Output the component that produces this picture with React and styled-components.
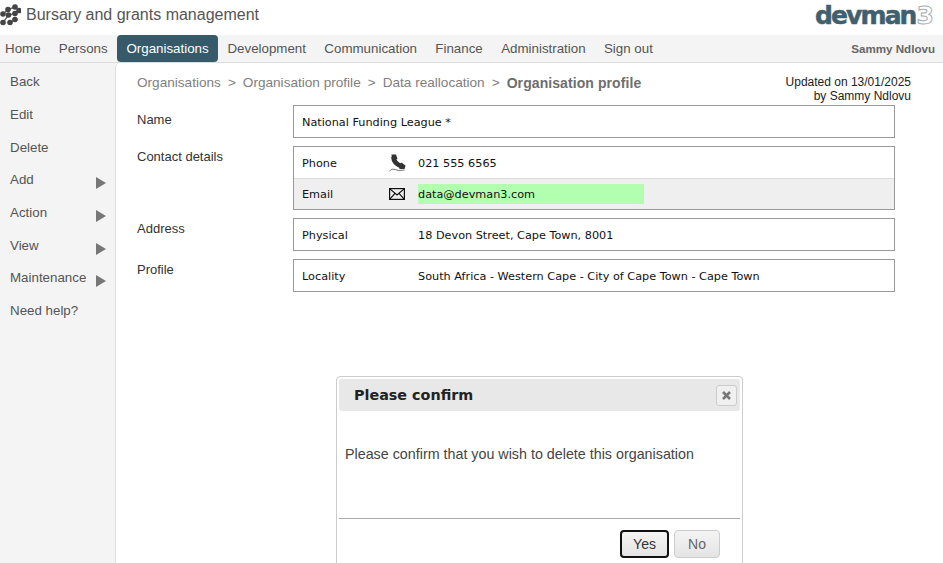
import React from "react";
import styled, { createGlobalStyle } from "styled-components";

const GlobalStyle = createGlobalStyle`
  html, body {
    margin: 0;
    padding: 0;
    height: 563px;
    overflow: hidden;
    background: #fff;
    font-family: "Liberation Sans", Arial, sans-serif;
  }
`;

const Page = styled.div`
  position: relative;
  width: 943px;
  height: 563px;
  overflow: hidden;
  background: #f4f4f4;
`;

const Header = styled.header`
  height: 35px;
  background: #fff;
  display: flex;
  align-items: center;
  justify-content: space-between;
  padding: 0 11px 5px 0;
  box-sizing: border-box;
`;

const Brand = styled.div`
  display: flex;
  align-items: center;
  gap: 5px;
  font-size: 16px;
  color: #555;
`;

const LogoText = styled.div`
  font-family: "DejaVu Sans", sans-serif;
  font-weight: 700;
  font-size: 25px;
  letter-spacing: -1.9px;
  color: #41606f;
  -webkit-text-stroke: 0.5px #41606f;
  span {
    color: #fff;
    margin-left: 1px;
    -webkit-text-stroke: 1px #a3adb1;
  }
`;

const Nav = styled.nav`
  height: 28px;
  box-sizing: border-box;
  display: flex;
  align-items: stretch;
  padding-right: 8px;
  border-bottom: 1px solid #ddd;
  font-size: 13.33px;
`;

const NavItem = styled.div`
  height: 27px;
  display: flex;
  align-items: center;
  padding: 0 ${(props) => (props.$active ? 9.6 : 9.2)}px;
  border-radius: 4px;
  color: ${(props) => (props.$active ? "#fff" : "#555")};
  background: ${(props) => (props.$active ? "#375a6a" : "transparent")};
  &:first-child {
    padding-left: 5px;
    padding-right: 9px;
  }
`;

const NavUser = styled.div`
  margin-left: auto;
  display: flex;
  align-items: center;
  height: 27px;
  font-size: 11.6px;
  font-weight: 700;
  color: #666;
`;

const Body = styled.div`
  display: flex;
  height: 500px;
`;

const Sidebar = styled.aside`
  width: 115px;
  flex: none;
  padding-top: 2.5px;
  box-sizing: border-box;
`;

const SideItem = styled.div`
  height: 32.7px;
  display: flex;
  align-items: center;
  padding-left: 10px;
  font-size: 13.33px;
  color: #555;
`;

const Arrow = styled.span`
  width: 0;
  height: 0;
  margin: 7px 9px 0 auto;
  border-left: 10px solid #777;
  border-top: 6px solid transparent;
  border-bottom: 6px solid transparent;
`;

const Main = styled.main`
  flex: 1;
  background: #fff;
  border-left: 1px solid #ddd;
  border-top-left-radius: 5px;
  padding: 0 32px 0 21px;
`;

const TopRow = styled.div`
  display: flex;
  justify-content: space-between;
  height: 42px;
  padding-top: 12px;
  box-sizing: border-box;
`;

const Crumbs = styled.div`
  display: flex;
  gap: 7px;
  font-size: 13.6px;
  color: #808080;
  line-height: 16px;
  b {
    color: #6e6e6e;
    font-size: 14px;
    letter-spacing: 0.08px;
  }
`;

const Updated = styled.div`
  font-size: 12px;
  line-height: 14px;
  text-align: right;
  color: #222;
`;

const Section = styled.section`
  display: grid;
  grid-template-columns: 156px 602px;
  margin-bottom: 8px;
`;

const Label = styled.div`
  font-size: 13px;
  line-height: 16px;
  padding-top: ${(props) => props.$top || 3}px;
  color: #333;
`;

const Box = styled.div`
  border: 1px solid #999;
`;

const Row = styled.div`
  display: flex;
  align-items: center;
  box-sizing: border-box;
  height: 31px;
  padding: ${(props) => (props.$shaded ? 0 : 1)}px 0 0 8px;
  font-family: "DejaVu Sans", Verdana, sans-serif;
  font-size: 11.25px;
  color: #111;
  background: ${(props) => (props.$shaded ? "#efefef" : "#fff")};
  border-top: ${(props) => (props.$shaded ? "1px solid #ddd" : "none")};
`;

const RowLabel = styled.div`
  width: ${(props) => (props.$wide ? 116 : 87)}px;
  flex: none;
`;

const RowIcon = styled.div`
  width: 29px;
  flex: none;
  display: flex;
  align-items: center;
`;

const RowValue = styled.div`
  ${(props) =>
    props.$highlight &&
    `
    width: 226px;
    height: 20px;
    line-height: 21px;
    background: #b3ffb0;
  `}
`;

const Dialog = styled.div`
  position: absolute;
  left: 336px;
  top: 376px;
  width: 407px;
  height: 200px;
  box-sizing: border-box;
  background: #fff;
  border: 1px solid #ccc;
  border-radius: 4px;
  padding: 2px;
`;

const DialogTitle = styled.div`
  height: 32px;
  background: #e8e8e8;
  border-radius: 3px;
  display: flex;
  align-items: center;
  justify-content: space-between;
  padding: 0 3px 0 15px;
  font-family: "DejaVu Sans", Verdana, sans-serif;
  font-size: 14.35px;
  font-weight: 700;
  color: #222;
`;

const CloseButton = styled.div`
  width: 19px;
  height: 19px;
  border: 1px solid #ccc;
  border-radius: 3px;
  background: #f0f0f0;
  display: flex;
  align-items: center;
  justify-content: center;
`;

const DialogText = styled.div`
  height: 107px;
  box-sizing: border-box;
  padding: 35px 0 0 6px;
  font-size: 14.3px;
  line-height: 16px;
  color: #444;
`;

const DialogFooter = styled.div`
  border-top: 1px solid #aaa;
  display: flex;
  justify-content: flex-end;
  gap: 5px;
  padding: 11px 20px 0 0;
`;

const Button = styled.div`
  box-sizing: border-box;
  height: 28px;
  width: ${(props) => props.$width}px;
  display: flex;
  align-items: center;
  justify-content: center;
  font-size: 14px;
  border-radius: 4px;
  color: ${(props) => (props.$focused ? "#333" : "#666")};
  border: ${(props) => (props.$focused ? "2px solid #111" : "1px solid #ccc")};
  background: linear-gradient(#f4f4f4, #e4e4e4);
`;

const NAV_ITEMS = ["Home", "Persons", "Organisations", "Development", "Communication", "Finance", "Administration", "Sign out"];

const SIDE_ITEMS = [
  { name: "Back" },
  { name: "Edit" },
  { name: "Delete" },
  { name: "Add", more: true },
  { name: "Action", more: true },
  { name: "View", more: true },
  { name: "Maintenance", more: true },
  { name: "Need help?" },
];

// three diagonal bands of dots, like the original mark
const BANDS = [
  [[3, 10], [8, 5.5], [15, 3]],
  [[3, 18.5], [8.5, 11], [15, 9.5], [19, 6.5]],
  [[10, 18.5], [15, 15.5]],
];

const BrandIcon = () => (
  <svg width="21" height="22" viewBox="0 0 21 22">
    {BANDS.map((band, i) => (
      <g key={i} fill="#444">
        <polyline points={band.map((p) => p.join(",")).join(" ")} fill="none" stroke="#666" strokeWidth="1.4" />
        {band.map((p) => (
          <circle key={p.join()} cx={p[0]} cy={p[1]} r="2.8" />
        ))}
      </g>
    ))}
  </svg>
);

const PhoneIcon = () => (
  <svg width="17" height="18" viewBox="0 0 17 18" fill="none">
    <path d="M4.500 3 Q4.500 9 12.500 12.500" stroke="#333" strokeWidth="4.6" />
    <path d="M2.500 .5 L7 .5 L8.500 5 L3 6.500 Z M10 11 L12.500 8.500 L16.500 11.500 L15.500 15 L10.500 15 Z" fill="#333" />
    <path d="M.5 17 Q2.500 14 6 15.500 Q9 17.500 15.500 16" stroke="#777" strokeWidth="1" />
  </svg>
);

const MailIcon = () => (
  <svg width="16" height="12" viewBox="0 0 16 12" fill="none" stroke="#111" strokeWidth="1.2">
    <rect x=".6" y=".6" width="14.8" height="10.8" />
    <path d="M.6 .6 L8 7 L15.400 .6 M.6 11.400 L6 5.300 M15.400 11.400 L10 5.300" />
  </svg>
);

const CloseIcon = () => (
  <svg width="9" height="9" viewBox="0 0 9 9" stroke="#777" strokeWidth="2.6">
    <path d="M1 1 L8 8 M8 1 L1 8" />
  </svg>
);

export default function App() {
  return (
    <Page>
      <GlobalStyle />
      <Header>
        <Brand>
          <BrandIcon />
          Bursary and grants management
        </Brand>
        <LogoText>
          devman<span>3</span>
        </LogoText>
      </Header>
      <Nav>
        {NAV_ITEMS.map((item) => (
          <NavItem key={item} $active={item === "Organisations"}>
            {item}
          </NavItem>
        ))}
        <NavUser>Sammy Ndlovu</NavUser>
      </Nav>
      <Body>
        <Sidebar>
          {SIDE_ITEMS.map((item) => (
            <SideItem key={item.name}>
              {item.name}
              {item.more && <Arrow />}
            </SideItem>
          ))}
        </Sidebar>
        <Main>
          <TopRow>
            <Crumbs>
              <span>Organisations</span>
              <span>&gt;</span>
              <span>Organisation profile</span>
              <span>&gt;</span>
              <span>Data reallocation</span>
              <span>&gt;</span>
              <b>Organisation profile</b>
            </Crumbs>
            <Updated>
              Updated on 13/01/2025
              <br />
              by Sammy Ndlovu
            </Updated>
          </TopRow>
          <Section>
            <Label $top={7}>Name</Label>
            <Box>
              <Row>National Funding League *</Row>
            </Box>
          </Section>
          <Section>
            <Label>Contact details</Label>
            <Box>
              <Row>
                <RowLabel>Phone</RowLabel>
                <RowIcon>
                  <PhoneIcon />
                </RowIcon>
                <RowValue>021 555 6565</RowValue>
              </Row>
              <Row $shaded>
                <RowLabel>Email</RowLabel>
                <RowIcon>
                  <MailIcon />
                </RowIcon>
                <RowValue $highlight>data@devman3.com</RowValue>
              </Row>
            </Box>
          </Section>
          <Section>
            <Label>Address</Label>
            <Box>
              <Row>
                <RowLabel $wide>Physical</RowLabel>
                <RowValue>18 Devon Street, Cape Town, 8001</RowValue>
              </Row>
            </Box>
          </Section>
          <Section>
            <Label>Profile</Label>
            <Box>
              <Row>
                <RowLabel $wide>Locality</RowLabel>
                <RowValue>South Africa - Western Cape - City of Cape Town - Cape Town</RowValue>
              </Row>
            </Box>
          </Section>
        </Main>
      </Body>
      <Dialog>
        <DialogTitle>
          Please confirm
          <CloseButton>
            <CloseIcon />
          </CloseButton>
        </DialogTitle>
        <DialogText>Please confirm that you wish to delete this organisation</DialogText>
        <DialogFooter>
          <Button $focused $width={49}>
            Yes
          </Button>
          <Button $width={46}>No</Button>
        </DialogFooter>
      </Dialog>
    </Page>
  );
}
